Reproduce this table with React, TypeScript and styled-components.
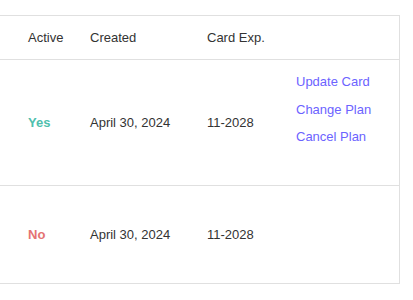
import styled, { createGlobalStyle } from "styled-components";

const GlobalStyle = createGlobalStyle`
  html, body {
    margin: 0;
    padding: 0;
    background: #ffffff;
  }
  body {
    font-family: "Liberation Sans", Arial, sans-serif;
    color: #333333;
  }
`;

// === STYLED COMPONENTS ===

const Page = styled.div`
  padding-top: 15px;
  width: 400px;
`;

const Table = styled.table`
  width: 400px;
  border-collapse: collapse;
  table-layout: fixed;
  font-size: 13px;
  border-top: 1px solid #e0e0e0;
  border-right: 1px solid #e0e0e0;
`;

const HeadCell = styled.th`
  height: 43px;
  padding: 0;
  text-align: left;
  font-weight: 400;
  color: #333333;
  border-bottom: 1px solid #e0e0e0;
  vertical-align: middle;
`;

const Row = styled.tr<{ $height: number }>`
  height: ${(p) => p.$height}px;
  border-bottom: 1px solid #e0e0e0;
`;

const Cell = styled.td<{ $top?: boolean }>`
  padding: ${(p) => (p.$top ? "8px 0 0" : "0")};
  vertical-align: ${(p) => (p.$top ? "top" : "middle")};
  color: #333333;
`;

const Status = styled.span<{ $active: boolean }>`
  font-weight: 700;
  color: ${(p) => (p.$active ? "#4fbfad" : "#e57373")};
`;

const Actions = styled.div`
  display: flex;
  flex-direction: column;
`;

const ActionLink = styled.a`
  color: #6c63ff;
  line-height: 27.5px;
  text-decoration: none;
  cursor: pointer;
`;

// === DATA ===

interface Subscription {
  active: boolean;
  created: string;
  cardExp: string;
}

const SUBSCRIPTIONS: Subscription[] = [
  { active: true, created: "April 30, 2024", cardExp: "11-2028" },
  { active: false, created: "April 30, 2024", cardExp: "11-2028" },
];

// === COMPONENT ===

export default function App() {
  return (
    <Page>
      <GlobalStyle />
      <Table>
        <colgroup>
          <col style={{ width: 28 }} />
          <col style={{ width: 62 }} />
          <col style={{ width: 117 }} />
          <col style={{ width: 89 }} />
          <col />
        </colgroup>
        <thead>
          <tr>
            <HeadCell />
            <HeadCell>Active</HeadCell>
            <HeadCell>Created</HeadCell>
            <HeadCell>Card Exp.</HeadCell>
            <HeadCell />
          </tr>
        </thead>
        <tbody>
          {SUBSCRIPTIONS.map((sub, index) => (
            <Row key={index} $height={sub.active ? 126 : 98}>
              <Cell />
              <Cell>
                <Status $active={sub.active}>{sub.active ? "Yes" : "No"}</Status>
              </Cell>
              <Cell>{sub.created}</Cell>
              <Cell>{sub.cardExp}</Cell>
              <Cell $top>
                {sub.active && (
                  <Actions>
                    <ActionLink>Update Card</ActionLink>
                    <ActionLink>Change Plan</ActionLink>
                    <ActionLink>Cancel Plan</ActionLink>
                  </Actions>
                )}
              </Cell>
            </Row>
          ))}
        </tbody>
      </Table>
    </Page>
  );
}
